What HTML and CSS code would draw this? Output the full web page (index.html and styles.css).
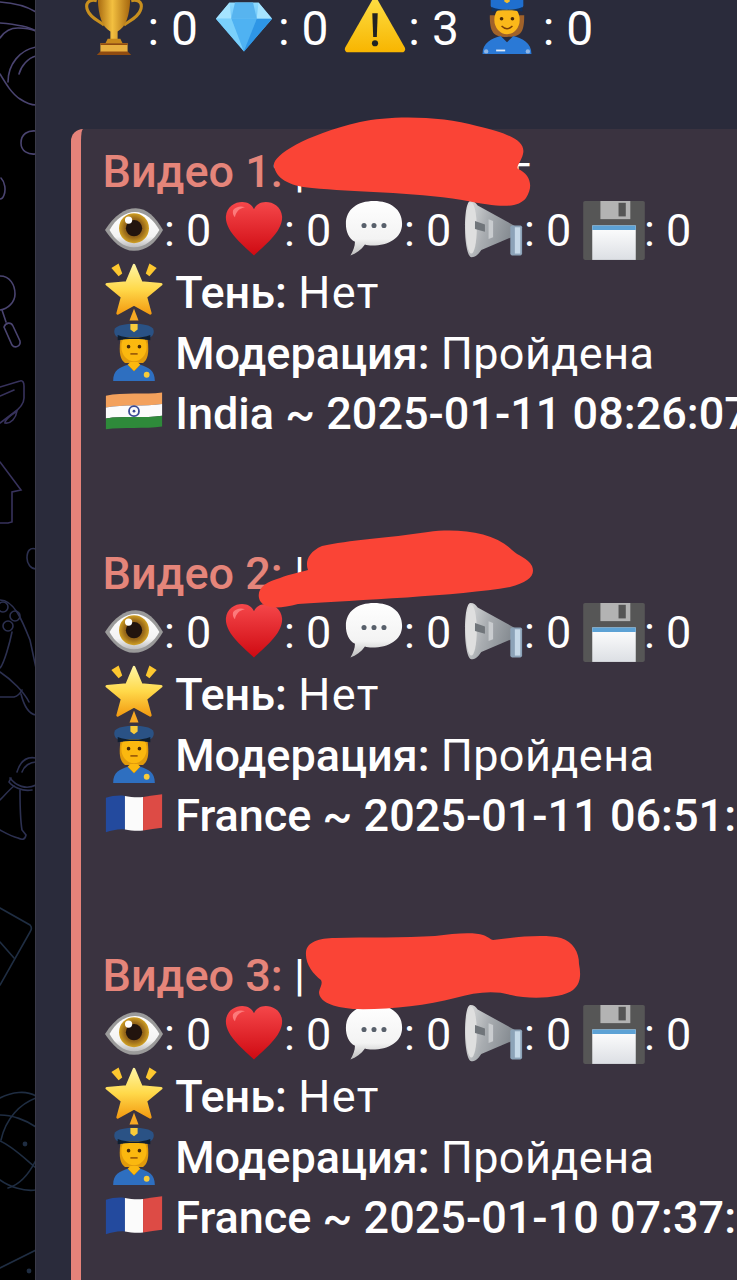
FILE: index.html
```html
<!DOCTYPE html>
<html lang="ru">
<head>
    <meta charset="UTF-8">
    <meta name="viewport" content="width=device-width, initial-scale=1.0">
    <title>Статистика видео</title>
    <link rel="stylesheet" href="styles.css">
</head>
<body>

    <div class="page">
        <!-- wallpaper strip on the left -->
        <aside class="wallpaper">
            <svg class="doodles" viewBox="0 0 36 1280" width="36" height="1280" fill="none" stroke-width="1.6" stroke-linecap="round">
                <g stroke="#4a4470">
                    <path d="M0 2C14 3 28 7 36 12"/>
                    <path d="M0 23C12 24 28 26 36 31"/>
                    <path d="M0 38C4 32 10 28 18 28C24 28 31 29 36 31"/>
                    <path d="M0 74C6 84 12 94 20 99C26 103 31 105 36 105"/>
                    <path d="M8 82C8 64 20 50 36 47"/>
                    <path d="M19 74C21 66 28 58 36 56"/>
                    <path d="M36 131C28 130 21 134 21 143C21 151 28 155 36 154"/>
                    <path d="M1 178C5 182 6 190 4 195C3 198 1 199 0 199"/>
                    <path d="M0 276C10 276 15 285 15 294C15 302 8 309 0 310"/>
                    <path d="M2 310L6 322"/>
                    <path d="M4 327C6 322 11 322 13 326L20 341C21 346 15 349 12 345Z"/>
                </g>
                <g stroke="#37325c">
                    <path d="M0 387L20 381C23 380 24 383 24 386V398C24 404 18 410 12 414L0 423"/>
                    <path d="M0 396L14 390"/>
                    <path d="M5 422C7 417 13 414 17 411C16 418 11 424 5 423Z"/>
                    <path d="M0 462L21 490L12 492V522L8 523H0"/>
                </g>
                <g stroke="#2c3050">
                    <path d="M36 549C30 547 27 551 27 558C27 564 31 569 36 569"/>
                    <path d="M0 600C14 600 22 620 30 640L36 668"/>
                    <circle cx="3" cy="607" r="5"/>
                    <circle cx="15" cy="616" r="5"/>
                    <circle cx="8" cy="626" r="5"/>
                    <path d="M12 632C10 642 4 664 0 668"/>
                    <path d="M0 672C12 680 24 692 29 702"/>
                    <path d="M0 697H14C18 696 20 694 22 690"/>
                    <path d="M21 694C24 706 29 714 36 715"/>
                    <path d="M36 758C26 756 20 762 17 772"/>
                    <path d="M36 762C30 762 24 766 22 772"/>
                    <path d="M10 778C16 786 26 790 36 785"/>
                    <path d="M11 778L9 782C12 786 22 792 32 790"/>
                    <path d="M20 790C20 806 20 818 22 830L26 835C25 840 22 840 18 838C10 836 4 832 0 830"/>
                    <path d="M0 800C4 796 9 790 14 786"/>
                </g>
                <g stroke="#1f2d42">
                    <path d="M0 908L30 925C32 927 32 929 30 932L0 985"/>
                    <path d="M0 942L14 958"/>
                    <path d="M0 1098C12 1092 26 1090 36 1096"/>
                    <path d="M0 1115C12 1115 26 1120 36 1127"/>
                    <path d="M1 1140C6 1118 20 1104 36 1098"/>
                    <path d="M0 1141C12 1146 24 1158 36 1168"/>
                    <path d="M8 1188C22 1184 30 1172 36 1160"/>
                    <path d="M0 1180C8 1186 24 1192 36 1190"/>
                    <path d="M0 1268L36 1250"/>
                </g>
                <circle cx="25" cy="1144" r="2.4" fill="#1f2d42"/>
                <circle cx="29" cy="1271" r="2.4" fill="#1f2d42"/>
            </svg>
        </aside>

        <main class="chat">
            <div class="totals">
                <svg class="emoji"><use href="#e-trophy"/></svg>: 0
                <svg class="emoji"><use href="#e-gem"/></svg>: 0
                <svg class="emoji"><use href="#e-warning"/></svg>: 3
                <svg class="emoji"><use href="#e-policewoman"/></svg>: 0
            </div>

            <div class="quote">

                <section class="video">
                    <div class="row title">Видео 1: <span class="link">| <span class="link-gap"></span>г</span></div>
                    <div class="row stats">
                        <svg class="emoji"><use href="#e-eye"/></svg>: 0
                        <svg class="emoji"><use href="#e-heart"/></svg>: 0
                        <svg class="emoji"><use href="#e-bubble"/></svg>: 0
                        <svg class="emoji"><use href="#e-horn"/></svg>: 0
                        <svg class="emoji"><use href="#e-floppy"/></svg>: 0
                    </div>
                    <div class="row"><svg class="emoji"><use href="#e-star"/></svg> <b>Тень:</b> <span class="no">Нет</span></div>
                    <div class="row"><svg class="emoji"><use href="#e-police"/></svg> <b>Модерация:</b> <span class="passed">Пройдена</span></div>
                    <div class="row"><svg class="emoji"><use href="#e-india"/></svg> <b>India ~ 2025-01-11 08:26:07</b></div>
                    <svg class="blob blob-1" viewBox="0 0 262 92" width="262" height="92"><path d="M2 50C0 40 30 20 88 6C120 -1 170 0 205 10C240 18 254 26 251 38C249 46 244 50 246 53C258 58 262 70 254 82C246 92 230 92 190 84C140 76 80 76 40 72C16 70 4 62 2 50Z"/></svg>
                </section>

                <section class="video">
                    <div class="row title">Видео 2: <span class="link">|</span></div>
                    <div class="row stats">
                        <svg class="emoji"><use href="#e-eye"/></svg>: 0
                        <svg class="emoji"><use href="#e-heart"/></svg>: 0
                        <svg class="emoji"><use href="#e-bubble"/></svg>: 0
                        <svg class="emoji"><use href="#e-horn"/></svg>: 0
                        <svg class="emoji"><use href="#e-floppy"/></svg>: 0
                    </div>
                    <div class="row"><svg class="emoji"><use href="#e-star"/></svg> <b>Тень:</b> <span class="no">Нет</span></div>
                    <div class="row"><svg class="emoji"><use href="#e-police"/></svg> <b>Модерация:</b> <span class="passed">Пройдена</span></div>
                    <div class="row"><svg class="emoji"><use href="#e-france"/></svg> <b>France ~ 2025-01-11 06:51:32</b></div>
                    <svg class="blob blob-2" viewBox="0 0 276 80" width="276" height="80"><path d="M1 68C-1 58 8 52 22 48C32 44 44 42 50 40C47 32 50 22 64 16C90 10 130 8 170 2C200 -2 236 2 254 20C260 26 270 28 274 36C278 46 270 52 252 57C200 66 100 70 40 74C18 80 3 78 1 68Z"/></svg>
                </section>

                <section class="video">
                    <div class="row title">Видео 3: <span class="link">|</span></div>
                    <div class="row stats">
                        <svg class="emoji"><use href="#e-eye"/></svg>: 0
                        <svg class="emoji"><use href="#e-heart"/></svg>: 0
                        <svg class="emoji"><use href="#e-bubble"/></svg>: 0
                        <svg class="emoji"><use href="#e-horn"/></svg>: 0
                        <svg class="emoji"><use href="#e-floppy"/></svg>: 0
                    </div>
                    <div class="row"><svg class="emoji"><use href="#e-star"/></svg> <b>Тень:</b> <span class="no">Нет</span></div>
                    <div class="row"><svg class="emoji"><use href="#e-police"/></svg> <b>Модерация:</b> <span class="passed">Пройдена</span></div>
                    <div class="row"><svg class="emoji"><use href="#e-france"/></svg> <b>France ~ 2025-01-10 07:37:18</b></div>
                    <svg class="blob blob-3" viewBox="0 0 276 80" width="276" height="80"><path d="M1 20C2 10 14 6 30 6C60 5 100 6 130 4C150 1 170 0 178 3C184 5 186 8 188 8C210 5 240 2 256 6C268 10 274 20 274 32C276 42 276 52 268 58C258 66 226 68 206 63C190 58 170 60 150 66C120 74 80 78 48 77C28 75 14 70 14 60C15 55 18 52 16 48C8 42 0 32 1 20Z"/></svg>
                </section>

            </div>
        </main>
    </div>

    <!-- emoji set -->
    <svg class="sprite" xmlns="http://www.w3.org/2000/svg">
        <defs>
            <linearGradient id="g-gold" x1="0" x2="1" y1="0" y2="0"><stop offset="0" stop-color="#a86a10"/><stop offset=".45" stop-color="#f3c040"/><stop offset="1" stop-color="#a5660e"/></linearGradient>
            <linearGradient id="g-gem" x1="0" x2="0" y1="0" y2="1"><stop offset="0" stop-color="#8fdcff"/><stop offset="1" stop-color="#2b95ea"/></linearGradient>
            <linearGradient id="g-warn" x1="0" x2="0" y1="0" y2="1"><stop offset="0" stop-color="#fde047"/><stop offset="1" stop-color="#f8b500"/></linearGradient>
            <linearGradient id="g-heart" x1="0" x2="0" y1="0" y2="1"><stop offset="0" stop-color="#f5474a"/><stop offset="1" stop-color="#cf0a12"/></linearGradient>
            <linearGradient id="g-white" x1="0" x2="0" y1="0" y2="1"><stop offset="0" stop-color="#ffffff"/><stop offset=".7" stop-color="#f3f3f3"/><stop offset="1" stop-color="#bdbdbd"/></linearGradient>
            <linearGradient id="g-horn" x1="0" x2="1" y1="0" y2=".3"><stop offset="0" stop-color="#e2e2e2"/><stop offset=".5" stop-color="#a9adb1"/><stop offset="1" stop-color="#858b91"/></linearGradient>
            <linearGradient id="g-star" x1="0" x2="0" y1="0" y2="1"><stop offset="0" stop-color="#fff4a0"/><stop offset=".5" stop-color="#ffd94a"/><stop offset="1" stop-color="#f39c12"/></linearGradient>
            <linearGradient id="g-label" x1="0" x2="0" y1="0" y2="1"><stop offset="0" stop-color="#ffffff"/><stop offset="1" stop-color="#dcdfe4"/></linearGradient>
            <radialGradient id="g-iris"><stop offset="0" stop-color="#5a3410"/><stop offset=".65" stop-color="#9a6a1a"/><stop offset="1" stop-color="#d0a024"/></radialGradient>
        </defs>

        <symbol id="e-trophy" viewBox="0 0 64 64">
            <g transform="translate(0 2)">
                <path d="M13 2C3 0 0 6 3 13C6 21 15 24 21 29" fill="none" stroke="#c88f1e" stroke-width="3.4"/>
                <path d="M51 2C61 0 64 6 61 13C58 21 49 24 43 29" fill="none" stroke="#c88f1e" stroke-width="3.4"/>
                <path d="M14 -6H50C50 14 47 30 36 36V46H28V36C17 30 14 14 14 -6Z" fill="url(#g-gold)"/>
                <path d="M25 44H39L42 50H22Z" fill="#c98a1c"/>
                <rect x="17" y="49" width="30" height="10" fill="#e8b040"/>
                <path d="M17 49H47V51H17ZM17 58H47L51 62H13Z" fill="#8f4b10"/>
            </g>
        </symbol>

        <symbol id="e-gem" viewBox="0 0 64 64">
            <path d="M16 6H48L63 24L32 60L1 24Z" fill="url(#g-gem)"/>
            <path d="M16 6L1 24H18ZM48 6L63 24H46Z" fill="#a5e4ff"/>
            <path d="M18 24H46L32 60Z" fill="#4fb2f2"/>
            <path d="M1 24H18L32 60Z" fill="#7ad0fb"/>
            <path d="M22 6H42L46 24H18Z" fill="#57b4ef"/>
            <path d="M32 60L46 24H63Z" fill="#2e96e6"/>
        </symbol>

        <symbol id="e-warning" viewBox="0 0 64 64">
            <path d="M32 -2L65 56C66 59 64 61 62 61H2C0 61 -2 59 -1 56Z" fill="url(#g-warn)"/>
            <path d="M29 18H35L34 44H30Z" fill="#222"/>
            <circle cx="32" cy="51" r="3.4" fill="#222"/>
        </symbol>

        <symbol id="e-policewoman" viewBox="0 0 64 64">
            <path d="M13 20C13 38 16 44 32 44C48 44 51 38 51 20Z" fill="#a0622a"/>
            <ellipse cx="32" cy="25" rx="14" ry="16" fill="#fbb81a"/>
            <circle cx="26" cy="24" r="2" fill="#4a2a08"/>
            <circle cx="38" cy="24" r="2" fill="#4a2a08"/>
            <path d="M26 32C30 36 34 36 38 32" stroke="#7a3f08" stroke-width="1.6" fill="none"/>
            <path d="M14 -2H50V9C50 13 44 14 32 14C20 14 14 13 14 9Z" fill="#1f6fcf"/>
            <path d="M15 11C24 15 40 15 49 11V16C40 14 24 14 15 16Z" fill="#10325f"/>
            <path d="M29 -1H35V5L32 7L29 5Z" fill="#f6bd2a"/>
            <path d="M5 63C5 50 15 46 25 43L32 50L39 43C49 46 59 50 59 63Z" fill="#2a79d6"/>
            <path d="M20 58H30V60H20Z" fill="#dfe9f5"/>
            <circle cx="9" cy="60" r="2.4" fill="#8fb6e6"/><circle cx="55" cy="60" r="2.4" fill="#8fb6e6"/>
        </symbol>

        <symbol id="e-eye" viewBox="0 0 64 64">
            <path d="M0 32C10 16 22 8 34 8C46 8 56 18 64 32C56 46 46 55 32 55C18 55 8 44 0 32Z" fill="#9a9a9a"/>
            <path d="M5 32C12 19 23 12 33 12C44 12 54 21 60 32C54 43 44 51 32 51C20 51 11 43 5 32Z" fill="url(#g-white)"/>
            <circle cx="32" cy="30" r="16.5" fill="url(#g-iris)"/>
            <circle cx="32" cy="30" r="9" fill="#22140e"/>
            <circle cx="26" cy="21" r="4" fill="#fff"/>
        </symbol>

        <symbol id="e-heart" viewBox="0 0 64 64">
            <path d="M32 60C22 50 0 34 1 17C2 6 11 1 19 1C25 1 30 4 32 9C34 4 39 1 45 1C53 1 62 6 63 17C64 34 42 50 32 60Z" fill="url(#g-heart)"/>
            <path d="M9 10C12 6 18 5 22 7C16 8 12 12 11 18C9 16 8 13 9 10Z" fill="#ff8a8a" opacity=".8"/>
        </symbol>

        <symbol id="e-bubble" viewBox="0 0 64 64">
            <path d="M32 0C50 0 63 9 63 25C63 41 48 49 30 49C27 49 24 49 22 48C18 54 12 58 6 60C9 55 11 50 11 45C4 41 1 34 1 25C1 9 14 0 32 0Z" fill="url(#g-white)"/>
            <circle cx="21" cy="27" r="2.8" fill="#58606b"/>
            <circle cx="32" cy="27" r="2.8" fill="#58606b"/>
            <circle cx="43" cy="27" r="2.8" fill="#58606b"/>
        </symbol>

        <symbol id="e-horn" viewBox="0 0 64 64">
            <path d="M6 0C10 0 12 2 14 5L56 28L56 38L18 54C14 60 11 62 7 62C3 62 0 46 0 30C0 14 2 0 6 0Z" fill="url(#g-horn)"/>
            <ellipse cx="7" cy="30" rx="6" ry="28" fill="#dfdfdf"/>
            <path d="M11 22L22 26V34L11 31Z" fill="#70757a"/>
            <path d="M26 20L31 22V40L26 42Z" fill="#c9cccf"/>
            <rect x="50" y="27" width="13" height="33" rx="2" fill="#8ca3b8"/>
            <rect x="55" y="29" width="6" height="29" fill="#c6d9e8"/>
        </symbol>

        <symbol id="e-floppy" viewBox="0 0 64 64">
            <rect x="-2" y="0" width="68" height="65" rx="2" fill="#565656"/>
            <rect x="17" y="0" width="33" height="20" fill="#b3b3b3"/>
            <rect x="37" y="2" width="8" height="15" fill="#555"/>
            <rect x="8" y="27" width="48" height="38" fill="url(#g-label)"/>
            <rect x="8" y="27" width="48" height="5" fill="#5da2d5"/>
        </symbol>

        <symbol id="e-star" viewBox="0 0 64 64">
            <g transform="translate(0 -2.5)">
                <path d="M32 5L40 24L62 26L45 40L50 58L32 48L14 58L19 40L2 26L24 24Z" fill="url(#g-star)" stroke="url(#g-star)" stroke-width="3" stroke-linejoin="round"/>
                <path d="M7 8L15 3L19 14L15 17Z" fill="#fdc830"/>
                <path d="M57 8L49 3L45 14L49 17Z" fill="#fdc830"/>
                <path d="M32 53L37 66H27Z" fill="#f7a823"/>
            </g>
        </symbol>

        <symbol id="e-police" viewBox="0 0 64 64">
            <g transform="translate(0 -3)">
                <path d="M17 20C15 36 17 42 22 46H42C47 42 49 36 47 20Z" fill="#e09a0c"/>
                <ellipse cx="32" cy="28" rx="14" ry="16" fill="#fbb80f"/>
                <circle cx="26" cy="28" r="2" fill="#4a2c08"/>
                <circle cx="38" cy="28" r="2" fill="#4a2c08"/>
                <path d="M28 36H36" stroke="#8a4b08" stroke-width="1.6"/>
                <path d="M11 8C16 1 48 1 53 8C55 12 53 17 49 18H15C11 17 9 12 11 8Z" fill="#2a5285"/>
                <path d="M14 15C24 19 40 19 50 15V21C40 19 24 19 14 21Z" fill="#0f1e30"/>
                <path d="M28 3H36V9L32 12L28 9Z" fill="#f8cb3a"/>
                <path d="M9 66C9 54 16 51 25 48L32 55L39 48C48 51 55 54 55 66Z" fill="#2e6fc0"/>
                <path d="M25 48L32 55L39 48L36 45H28Z" fill="#fbb80f"/>
                <circle cx="46" cy="59" r="3.2" fill="#f8cb3a"/>
            </g>
        </symbol>

        <symbol id="e-india" viewBox="0 0 64 64">
            <path d="M1 13C20 9 44 12 63 9.5V22C44 25 20 22 1 26Z" fill="#f3a15c"/>
            <path d="M1 26C20 22 44 25 63 22V35C44 38 20 35 1 38Z" fill="#fbfbfb"/>
            <path d="M1 38C20 35 44 38 63 35V47C44 50 20 47 1 50Z" fill="#2e8a3a"/>
            <circle cx="32" cy="30" r="5.5" fill="none" stroke="#3a4a94" stroke-width="2"/>
            <circle cx="32" cy="30" r="1.5" fill="#3a4a94"/>
        </symbol>

        <symbol id="e-france" viewBox="0 0 64 64">
            <path d="M1 13C8 11 15 10 22 11V48C15 47 8 49 1 51Z" fill="#234a9e"/>
            <path d="M22 11C28 12 36 13 42 12V49C36 50 28 49 22 48Z" fill="#fbfbfb"/>
            <path d="M42 12C49 11 56 10 63 9V46C56 47 49 48 42 49Z" fill="#dd4b45"/>
        </symbol>
    </svg>

</body>
</html>
```

FILE: styles.css
```css
html, body {
    margin: 0;
    height: 1280px;
    overflow: hidden;
    background: #000;
}

body {
    font-family: Roboto, "Noto Sans", sans-serif;
    color: #fff;
}

symbol {
    overflow: visible;
}

.page {
    display: flex;
    width: 737px;
    height: 1280px;
    overflow: hidden;
}

.wallpaper {
    flex: 0 0 36px;
    background: #000;
}

.doodles {
    display: block;
}

.chat {
    flex: 1;
    min-width: 0;
    background: #2a2b3b;
    border-left: 1px solid #3a3a48;
    margin-left: -1px;
}

/* emoji on this line run off the top of the screen */
.totals {
    height: 124.5px;
    padding: 4.5px 0 0 43.5px;
    line-height: 48px;
    font-size: 48px;
    white-space: nowrap;
}

.totals .emoji {
    margin: -16px 4.5px 0 5.5px;
    vertical-align: -10.5px;
}

.totals .emoji:last-of-type {
    margin-left: 7px;
    margin-right: 7px;
}

.quote {
    margin-left: 35px;
    padding-top: 13px;
    height: 1160px;
    background: #3a3340;
    border-left: 10px solid #e5837a;
    border-top-left-radius: 12px;
}

.video {
    position: relative;
    padding-left: 21.5px;
    margin-bottom: 99.5px;
}

.row {
    height: 60.5px;
    line-height: 59px;
    font-size: 45px;
    white-space: nowrap;
}

.title {
    line-height: 60.5px;
    color: #e5857a;
    font-weight: 500;
}

.stats {
    line-height: 56px;
}

.row b {
    font-weight: 500;
}

.link {
    color: #fff;
    font-weight: 400;
}

.link-gap {
    display: inline-block;
    width: 195px;
}

.no {
    letter-spacing: 1.5px;
}

.passed {
    letter-spacing: 0.4px;
}

/* negative top margin keeps the line height set by the text */
.emoji {
    width: 58px;
    height: 58px;
    margin: -14px 1px 0 2.5px;
    vertical-align: -13px;
    overflow: visible;
}

/* paint over the link names */
.blob {
    position: absolute;
    fill: #fa4436;
}

.blob-1 {
    left: 191px;
    top: -26px;
}

.blob-2 {
    left: 177px;
    top: -14px;
}

.blob-3 {
    left: 224px;
    top: -14px;
}

.sprite {
    display: block;
    width: 0;
    height: 0;
}
```
